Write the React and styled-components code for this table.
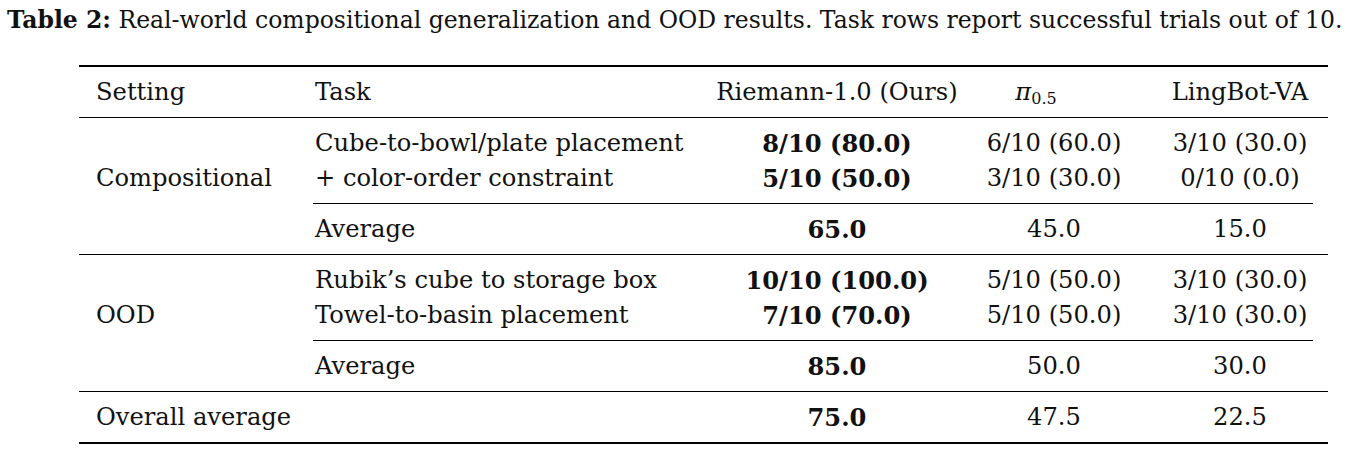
import React from "react";
import styled, { createGlobalStyle } from "styled-components";

const Global = createGlobalStyle`
  html, body { margin: 0; padding: 0; background: #fff; }
  body { font-family: "DejaVu Serif", "Liberation Serif", serif; color: #111; }
`;

const Page = styled.div`
  width: 1350px;
  height: 453px;
  overflow: hidden;
  background: #fff;
`;

const Caption = styled.p`
  margin: 0;
  padding: 0 0 0 7px;
  height: 40px;
  line-height: 40px;
  font-size: 23.5px;
  white-space: nowrap;
`;

const CaptionLabel = styled.strong`
  font-weight: bold;
`;

const Table = styled.div`
  margin: 25px 0 0 79px;
  width: 1249px;
  display: flex;
  flex-direction: column;
  font-size: 24.2px;
`;

const Rule = styled.div`
  height: ${(p) => (p.$thick ? 2 : 1)}px;
  background: #000;
  margin-left: ${(p) => (p.$partial ? 234 : 0)}px;
  margin-right: ${(p) => (p.$partial ? 15 : 0)}px;
`;

const Section = styled.div`
  padding: 7px 0 8px;
  display: flex;
  flex-direction: column;
`;

const Row = styled.div`
  display: grid;
  grid-template-columns: 219px 402px 274px 160px 194px;
  height: 35px;
  line-height: 37px;
  align-items: center;
  white-space: nowrap;
`;

const LabelCell = styled.div`
  padding-left: 17px;
`;

const NumCell = styled.div`
  text-align: center;
  padding-left: ${(p) => p.$padLeft || 0}px;
  padding-right: ${(p) => p.$padRight || 0}px;
  font-weight: ${(p) => (p.$bold ? "bold" : "normal")};
`;

const Pi = styled.span`
  font-style: italic;
  sub {
    font-style: normal;
    font-size: 16px;
    vertical-align: -4px;
    line-height: 0;
  }
`;

function DataRow({ setting = "", task, ours, pi, ling }) {
  return (
    <Row>
      <LabelCell>{setting}</LabelCell>
      <LabelCell>{task}</LabelCell>
      <NumCell $bold>{ours}</NumCell>
      <NumCell>{pi}</NumCell>
      <NumCell $padLeft={18}>{ling}</NumCell>
    </Row>
  );
}

export default function App() {
  return (
    <Page>
      <Global />
      <Caption>
        <CaptionLabel>Table 2:</CaptionLabel> Real-world compositional generalization and OOD
        results. Task rows report successful trials out of 10.
      </Caption>
      <Table>
        <Rule $thick />
        <Section>
          <Row>
            <LabelCell>Setting</LabelCell>
            <LabelCell>Task</LabelCell>
            <NumCell>Riemann-1.0 (Ours)</NumCell>
            <NumCell $padRight={36}>
              <Pi>
                π<sub>0.5</sub>
              </Pi>
            </NumCell>
            <NumCell $padLeft={18}>LingBot-VA</NumCell>
          </Row>
        </Section>
        <Rule />
        <Section>
          <DataRow task="Cube-to-bowl/plate placement" ours="8/10 (80.0)" pi="6/10 (60.0)" ling="3/10 (30.0)" />
          <DataRow setting="Compositional" task="+ color-order constraint" ours="5/10 (50.0)" pi="3/10 (30.0)" ling="0/10 (0.0)" />
        </Section>
        <Rule $partial />
        <Section>
          <DataRow task="Average" ours="65.0" pi="45.0" ling="15.0" />
        </Section>
        <Rule />
        <Section>
          <DataRow task="Rubik’s cube to storage box" ours="10/10 (100.0)" pi="5/10 (50.0)" ling="3/10 (30.0)" />
          <DataRow setting="OOD" task="Towel-to-basin placement" ours="7/10 (70.0)" pi="5/10 (50.0)" ling="3/10 (30.0)" />
        </Section>
        <Rule $partial />
        <Section>
          <DataRow task="Average" ours="85.0" pi="50.0" ling="30.0" />
        </Section>
        <Rule />
        <Section>
          <DataRow setting="Overall average" task="" ours="75.0" pi="47.5" ling="22.5" />
        </Section>
        <Rule $thick />
      </Table>
    </Page>
  );
}
